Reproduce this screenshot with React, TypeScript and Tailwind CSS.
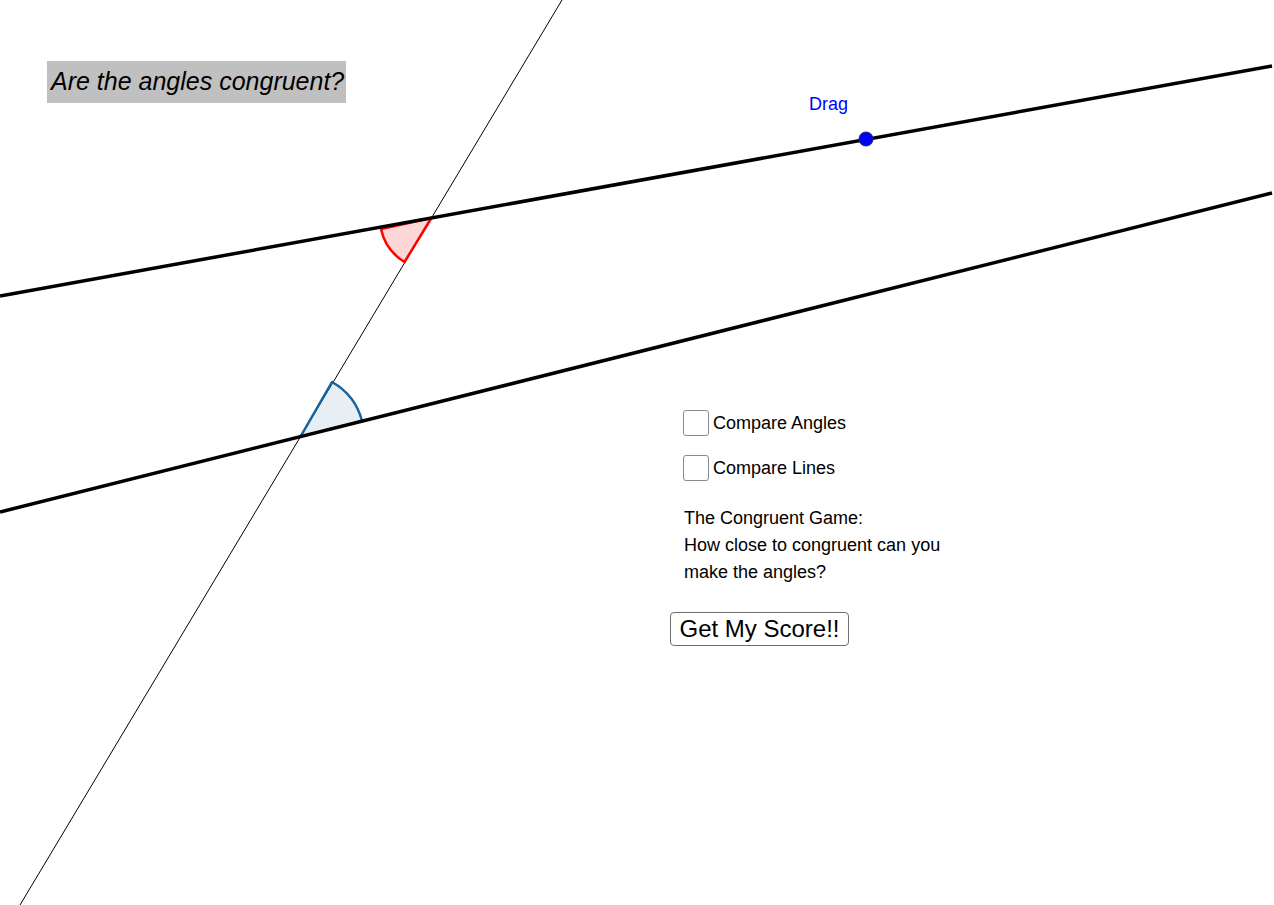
import React from "react";

const font = { fontFamily: '"Liberation Sans", Arial, sans-serif' };

function Checkbox({ label }: { label: string }) {
  return (
    <label className="flex items-center gap-[4px] h-[26px] text-[18px] text-black leading-none">
      <span className="block w-[26px] h-[26px] rounded-[3px] border border-[#8a8a8a] bg-white" />
      <span>{label}</span>
    </label>
  );
}

export default function App() {
  return (
    <div className="relative w-[1274px] h-[905px] bg-white overflow-hidden" style={font}>
      <svg className="absolute inset-0" width="1274" height="905" viewBox="0 0 1274 905">
        {/* transversal */}
        <line x1="562" y1="0" x2="20" y2="905" stroke="#000" strokeWidth="1" />
        {/* red angle */}
        <path
          d="M431.4 218 L381 229 A51.5 51.5 0 0 0 404.5 262 Z"
          fill="rgba(255,0,0,0.16)"
          stroke="#ff0000"
          strokeWidth="2.5"
          strokeLinejoin="round"
        />
        {/* blue angle */}
        <path
          d="M300.5 436.6 L332 382 A63 63 0 0 1 362 420.9 Z"
          fill="rgba(21,101,160,0.1)"
          stroke="#1565a0"
          strokeWidth="2.5"
          strokeLinejoin="round"
        />
        {/* parallel lines */}
        <line x1="0" y1="296" x2="1272" y2="66" stroke="#000" strokeWidth="3.5" />
        <line x1="0" y1="512" x2="1272" y2="193" stroke="#000" strokeWidth="3.5" />
        {/* drag point */}
        <circle cx="866" cy="139" r="7" fill="#0000ff" stroke="#222266" strokeWidth="1" />
      </svg>

      <div className="absolute left-[47px] top-[61px] h-[42px] w-[299px] bg-[#c0c0c0] flex items-center pl-[4px] text-[25px] italic text-black">
        Are the angles congruent?
      </div>

      <div className="absolute left-[809px] top-[93px] text-[18px] text-[#0000ff] leading-[22px]">Drag</div>

      <div className="absolute left-[670px] top-[410px] flex flex-col items-start">
        <div className="flex flex-col gap-[19px] pl-[13px]">
          <Checkbox label="Compare Angles" />
          <Checkbox label="Compare Lines" />
        </div>
        <div className="mt-[24px] pl-[14px] text-[18px] leading-[27px] text-black">
          <p>The Congruent Game:</p>
          <p>How close to congruent can you</p>
          <p>make the angles?</p>
        </div>
        <button className="mt-[26px] h-[34px] w-[179px] rounded-[4px] border border-[#707070] bg-white text-[24px] leading-none text-black">
          Get My Score!!
        </button>
      </div>
    </div>
  );
}
